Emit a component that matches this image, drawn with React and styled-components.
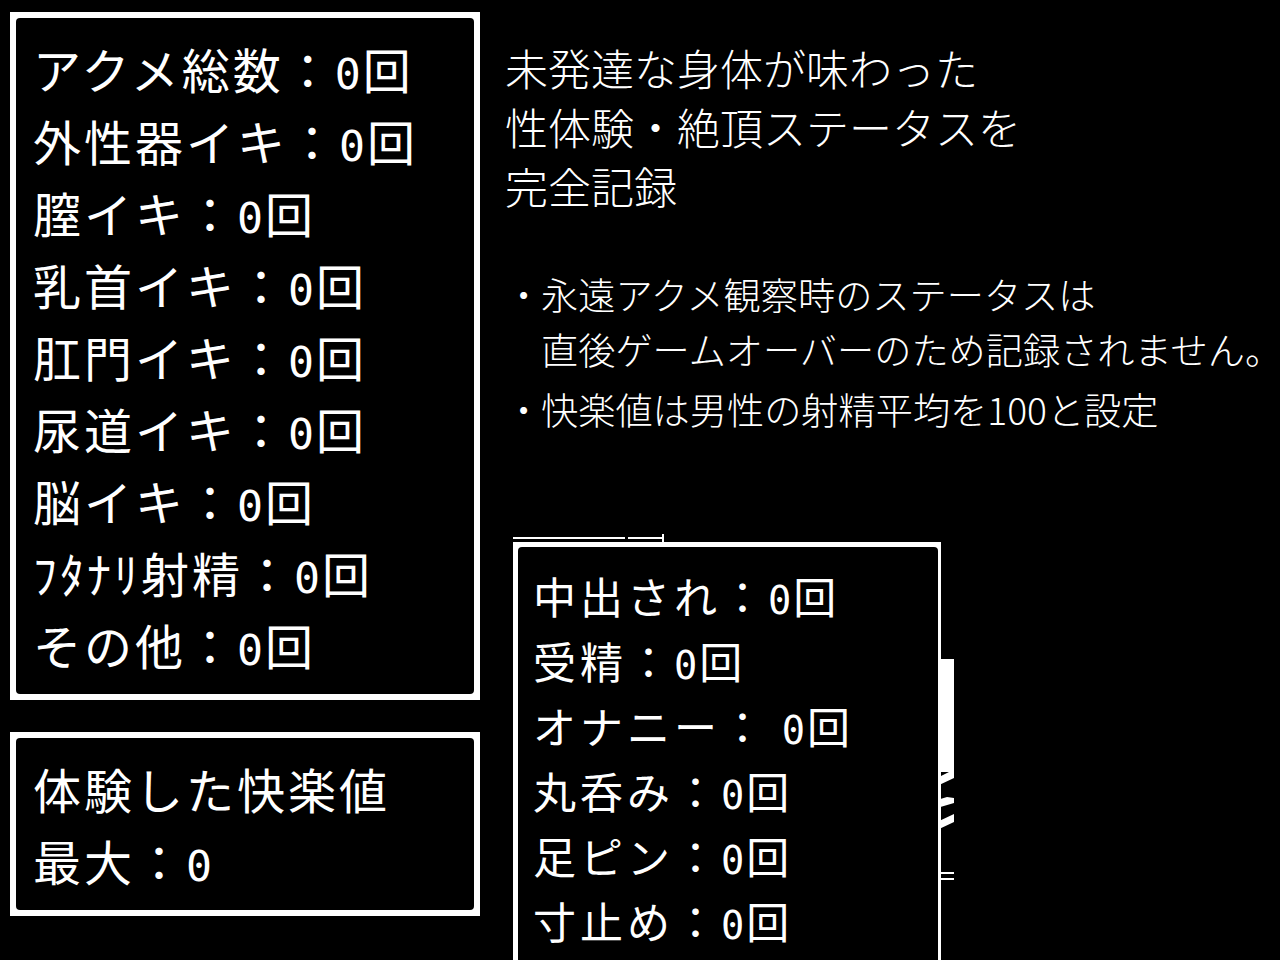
import React from "react";
import styled, { createGlobalStyle } from "styled-components";

const GlobalStyle = createGlobalStyle`
  html, body {
    margin: 0;
    padding: 0;
    background: #000;
    color: #fff;
    overflow: hidden;
  }
  body {
    width: 1280px;
    height: 960px;
    font-family: "Noto Sans CJK JP", "Noto Sans", sans-serif;
  }
`;

const Page = styled.div`
  display: flex;
  align-items: flex-start;
  gap: 25px;
  padding: 12px 0 0 10px;
  height: 948px;
  box-sizing: border-box;
`;

const LeftColumn = styled.div`
  display: flex;
  flex-direction: column;
  gap: 32px;
  width: 470px;
  flex-shrink: 0;
`;

// white frame with a black, slightly rounded inner panel
const Frame = styled.div`
  background: #fff;
  padding: ${(p) => p.$edges || "6px"};
  position: relative;
  z-index: 1;
`;

const Panel = styled.div`
  background: #000;
  border-radius: 4px;
  padding: ${(p) => p.$pad || "14px 17px"};
`;

const StatLine = styled.div`
  font-size: ${(p) => p.$size || 48}px;
  line-height: ${(p) => p.$line || 72}px;
  height: ${(p) => p.$line || 72}px;
  letter-spacing: ${(p) => p.$track || 3}px;
  white-space: nowrap;
`;

// counter digits use the slashed-zero mono face
const Count = styled.span`
  font-family: "DejaVu Sans Mono", monospace;
  font-size: 0.9em;
  line-height: 1;
  letter-spacing: 0;
  margin-right: 2px;
`;

const RightColumn = styled.div`
  display: flex;
  flex-direction: column;
  flex: 1;
`;

const Lead = styled.div`
  margin-top: 26px;
  font-size: 43px;
  line-height: 59px;
  font-weight: 300;
  white-space: nowrap;
`;

const Notes = styled.ul`
  list-style: none;
  margin: 52px 0 0;
  padding: 0;
  display: flex;
  flex-direction: column;
  gap: 5px;
  font-size: 37.2px;
  line-height: 55px;
  font-weight: 300;
`;

const Note = styled.li`
  display: flex;
  white-space: nowrap;
`;

const Bullet = styled.span`
  width: 36px;
  flex-shrink: 0;
  text-align: center;
`;

const SubWindow = styled.div`
  position: relative;
  margin: 105px 0 0 8px;
  width: 428px;
`;

// bits of the window lying underneath the sub window
const BackLine = styled.div`
  position: absolute;
  background: #fff;
  left: ${(p) => p.$x}px;
  top: ${(p) => p.$y}px;
  width: ${(p) => p.$w}px;
  height: ${(p) => p.$h}px;
  z-index: 0;
`;

const BackScrap = styled.svg`
  position: absolute;
  left: 424px;
  top: 230px;
  z-index: 0;
`;

const mainStats = [
  ["アクメ総数：", "0", "回"],
  ["外性器イキ：", "0", "回"],
  ["膣イキ：", "0", "回"],
  ["乳首イキ：", "0", "回"],
  ["肛門イキ：", "0", "回"],
  ["尿道イキ：", "0", "回"],
  ["脳イキ：", "0", "回"],
  ["ﾌﾀﾅﾘ射精：", "0", "回"],
  ["その他：", "0", "回"],
];

const subStats = [
  ["中出され：", "0", "回"],
  ["受精：", "0", "回"],
  ["オナニー： ", "0", "回"],
  ["丸呑み：", "0", "回"],
  ["足ピン：", "0", "回"],
  ["寸止め：", "0", "回"],
];

export default function App() {
  return (
    <>
      <GlobalStyle />
      <Page>
        <LeftColumn>
          <Frame>
            <Panel>
              {mainStats.map(([label, n, unit]) => (
                <StatLine key={label}>
                  {label}
                  <Count>{n}</Count>
                  {unit}
                </StatLine>
              ))}
            </Panel>
          </Frame>
          <Frame>
            <Panel>
              <StatLine>体験した快楽値</StatLine>
              <StatLine>
                最大：<Count>0</Count>
              </StatLine>
            </Panel>
          </Frame>
        </LeftColumn>

        <RightColumn>
          <Lead>
            未発達な身体が味わった
            <br />
            性体験・絶頂ステータスを
            <br />
            完全記録
          </Lead>
          <Notes>
            <Note>
              <Bullet>・</Bullet>
              <span>
                永遠アクメ観察時のステータスは
                <br />
                直後ゲームオーバーのため記録されません。
              </span>
            </Note>
            <Note>
              <Bullet>・</Bullet>
              <span>快楽値は男性の射精平均を100と設定</span>
            </Note>
          </Notes>

          <SubWindow>
            <BackLine $x={0} $y={-5} $w={112} $h={2} />
            <BackLine $x={115} $y={-5} $w={34} $h={2} />
            <BackLine $x={149} $y={-8} $w={2} $h={10} />
            <BackLine $x={424} $y={117} $w={17} $h={113} />
            <BackLine $x={424} $y={330} $w={17} $h={2} />
            <BackLine $x={424} $y={336} $w={17} $h={2} />
            <BackScrap width="17" height="70" viewBox="0 0 17 70">
              <path d="M0 6 L12 0 L17 0 L17 6 L0 14 Z" fill="#fff" />
              <path d="M0 28 L10 25 L17 26 L17 31 L0 36 Z" fill="#fff" />
              <path d="M0 50 L17 42 L17 50 L0 58 Z" fill="#fff" />
            </BackScrap>
            <Frame $edges="5px 3px 0 5px">
              <Panel $pad="16px 15px 20px">
                {subStats.map(([label, n, unit]) => (
                  <StatLine key={label} $size={43} $line={65} $track={4}>
                    {label}
                    <Count>{n}</Count>
                    {unit}
                  </StatLine>
                ))}
              </Panel>
            </Frame>
          </SubWindow>
        </RightColumn>
      </Page>
    </>
  );
}
